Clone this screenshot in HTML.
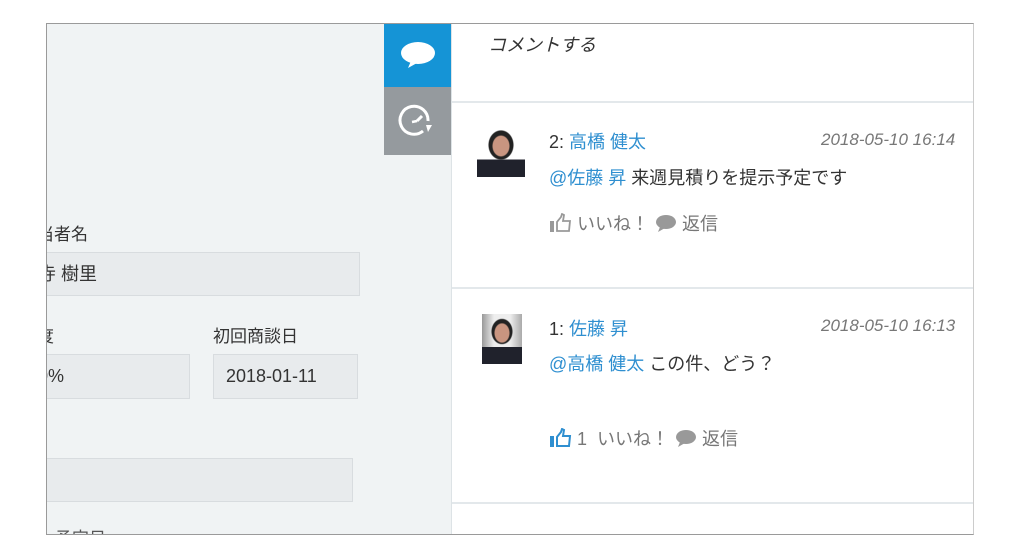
<!DOCTYPE html>
<html><head><meta charset="utf-8"><style>
body{margin:0;width:1024px;height:557px;background:#fff;position:relative;overflow:hidden;font-family:"Liberation Sans","Noto Sans CJK JP",sans-serif;}
.frame{position:absolute;left:46px;top:23px;width:926px;height:510px;border:1px solid #9a9a9a;border-right-color:#ccc;overflow:hidden;background:#f0f3f4;}
.abs{position:absolute;}
.lbl{font-size:17px;color:#333;}
.inp{background:#e8ebed;border:1px solid #d8dcdf;font-size:18px;color:#333;box-sizing:border-box;padding-left:10px;}
.right{position:absolute;left:404px;top:0;width:522px;height:510px;background:#fff;border-left:1px solid #dde3e6;}
.sep{position:absolute;left:0;width:522px;height:2px;background:#e3e8eb;}
.blue{color:#2f8fd0;}
.meta{font-size:18px;color:#333;}
.date{font-size:17px;font-style:italic;color:#777;}
.act{font-size:18px;color:#777;display:flex;align-items:center;}
.act svg{margin-right:4px}
</style></head><body>
<div class="frame">
 <div class="abs lbl" style="left:-10px;top:196px">当者名</div>
 <div class="abs inp" style="left:-20px;top:228px;width:333px;height:44px;line-height:42px">寺 樹里</div>
 <div class="abs lbl" style="left:-10px;top:298px">度</div>
 <div class="abs lbl" style="left:166px;top:298px">初回商談日</div>
 <div class="abs inp" style="left:-20px;top:330px;width:163px;height:45px;line-height:43px">0%</div>
 <div class="abs inp" style="left:166px;top:330px;width:145px;height:45px;line-height:43px;padding-left:12px">2018-01-11</div>
 <div class="abs inp" style="left:-20px;top:434px;width:326px;height:44px"></div>
 <div class="abs lbl" style="left:8px;top:500px;color:#555">予定日</div>
 <div class="abs" style="left:337px;top:0;width:67px;height:63px;background:#1594d6">
  <svg width="67" height="63"><ellipse cx="34" cy="29" rx="17" ry="11" fill="#fff"/><path d="M27 37 L24 44 L33 39Z" fill="#fff"/></svg>
 </div>
 <div class="abs" style="left:337px;top:63px;width:67px;height:68px;background:#959a9e">
  <svg width="67" height="68"><path d="M44 34 A14 14 0 1 0 39 44" fill="none" stroke="#fff" stroke-width="3"/><path d="M42 38 L48 38 L44 45Z" fill="#fff"/><path d="M33 34 L38 29" stroke="#fff" stroke-width="3"/><path d="M33 34 L28 35" stroke="#fff" stroke-width="2.5"/></svg>
 </div>
 <div class="right">
  <div class="abs" style="left:36px;top:7px;font-size:18px;font-style:italic;color:#333">コメントする</div>
  <div class="sep" style="top:77px"></div>
  <div class="abs" style="left:25px;top:103px;width:48px;height:50px;background:radial-gradient(ellipse 9px 11px at 50% 38%,#c99580 0 8px,transparent 9px),radial-gradient(ellipse 12px 14px at 50% 36%,#222 0 12px,transparent 13px),linear-gradient(#fff 64%,#20222c 66%)"></div>
  <div class="abs meta" style="left:97px;top:104px">2: <span class="blue">高橋 健太</span></div>
  <div class="abs date" style="left:369px;top:106px">2018-05-10 16:14</div>
  <div class="abs meta" style="left:97px;top:140px"><span class="blue">@佐藤 昇</span> 来週見積りを提示予定です</div>
  <div class="abs act" style="left:97px;top:186px">
   <svg width="24" height="20"><rect x="1" y="8" width="4" height="11" fill="#999"/><path d="M8 18 L8 9 L12 4 L13 1 L15 2 L14 8 L21 8 L20 18Z" fill="none" stroke="#999" stroke-width="1.8"/></svg>いいね！&nbsp;
   <svg width="24" height="20"><ellipse cx="12" cy="9" rx="10" ry="7" fill="#999"/><path d="M6 14 L4 19 L11 15Z" fill="#999"/></svg>返信</div>
  <div class="sep" style="top:263px"></div>
  <div class="abs" style="left:30px;top:290px;width:40px;height:50px;background:radial-gradient(ellipse 7px 9px at 50% 38%,#c99580 0 7px,transparent 8px),radial-gradient(ellipse 10px 12px at 50% 35%,#222 0 10px,transparent 11px),linear-gradient(90deg,#999,#eee 30%,#eee 70%,#aaa),linear-gradient(#eee,#eee)"><div style="position:absolute;left:0;bottom:0;width:40px;height:17px;background:#20222c"></div></div>
  <div class="abs meta" style="left:97px;top:291px">1: <span class="blue">佐藤 昇</span></div>
  <div class="abs date" style="left:369px;top:292px">2018-05-10 16:13</div>
  <div class="abs meta" style="left:97px;top:326px"><span class="blue">@高橋 健太</span> この件、どう？</div>
  <div class="abs act" style="left:97px;top:401px">
   <svg width="24" height="20"><rect x="1" y="8" width="4" height="11" fill="#2f8fd0"/><path d="M8 18 L8 9 L12 4 L13 1 L15 2 L14 8 L21 8 L20 18Z" fill="none" stroke="#2f8fd0" stroke-width="2"/></svg>1&nbsp; いいね！&nbsp;
   <svg width="24" height="20"><ellipse cx="12" cy="9" rx="10" ry="7" fill="#999"/><path d="M6 14 L4 19 L11 15Z" fill="#999"/></svg>返信</div>
  <div class="sep" style="top:478px"></div>
 </div>
</div>
</body></html>
